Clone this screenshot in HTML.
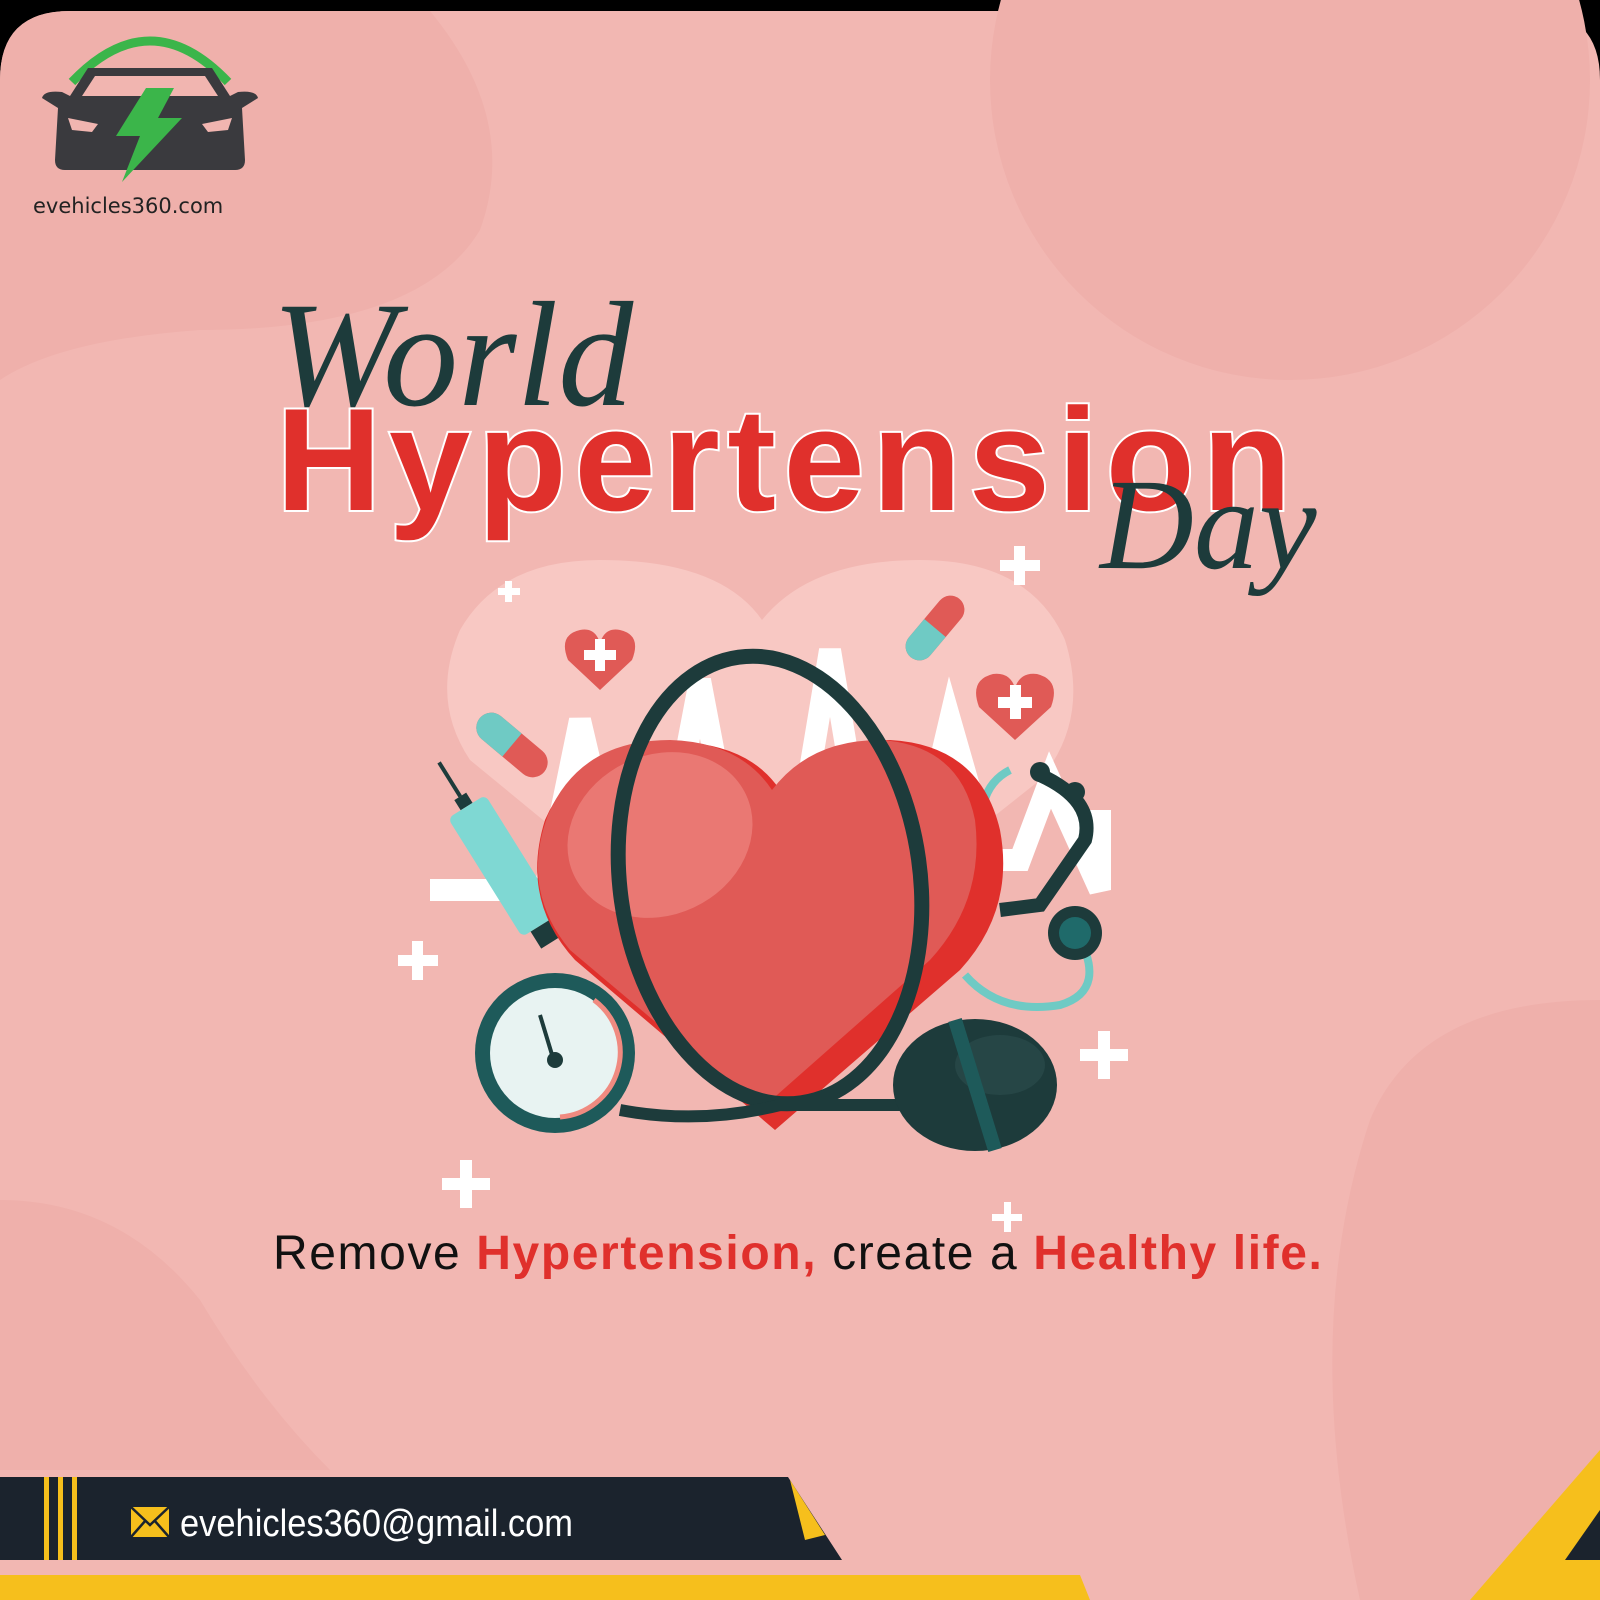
<!DOCTYPE html>
<html><head><meta charset="utf-8"><style>
html,body{margin:0;padding:0;background:#000}
#c{position:relative;width:1600px;height:1600px;overflow:hidden;background:#000}
</style></head><body><div id="c">
<svg width="1600" height="1600" viewBox="0 0 1600 1600" style="position:absolute;left:0;top:0">
<path d="M0 80 Q0 11 70 11 L1530 11 Q1600 11 1600 80 L1600 1600 L0 1600 Z" fill="#f2b7b2"/>
<circle cx="1290" cy="80" r="300" fill="#efb0ab"/>
<path d="M0 80 Q0 11 70 11 L430 11 Q520 120 480 230 Q420 330 200 330 Q60 340 0 380 Z" fill="#efb0ab"/>
<path d="M1600 1000 Q1420 1000 1370 1120 Q1300 1330 1360 1600 L1600 1600 Z" fill="#efb0ab"/>
<path d="M0 1200 Q120 1200 200 1300 Q260 1400 330 1470 L0 1470 Z" fill="#efb0ab"/>
<!-- logo -->
<path d="M72 82 Q150 0 228 82" fill="none" stroke="#3bb54a" stroke-width="9"/>
<path d="M42 98 Q44 90 62 92 L70 96 L88 68 L212 68 L230 96 L238 92 Q256 90 258 98 L242 108 L245 160 Q245 170 235 170 L65 170 Q55 170 55 160 L58 108 Z" fill="#3a3a3e"/>
<path d="M95 76 L205 76 L218 96 L82 96 Z" fill="#f1b5b0"/>
<path d="M68 118 L98 124 L92 132 L72 130 Z M232 118 L202 124 L208 132 L228 130 Z" fill="#f1b5b0"/>
<path d="M146 88 L174 88 L158 118 L182 118 L122 182 L140 136 L116 136 Z" fill="#3bb54a"/>
<text x="33" y="213" font-family="DejaVu Sans,sans-serif" font-size="21" fill="#222">evehicles360.com</text>
<!-- illustration -->
<path d="M762 1000 L470 760 Q430 700 460 630 Q500 560 600 560 Q720 560 762 620 Q810 560 920 560 Q1030 560 1065 640 Q1090 720 1040 780 Z" fill="#f8c8c3"/>
<polyline points="430,890 545,890 580,720 620,890 660,890 700,680 740,890 790,890 830,650 870,890 910,890 950,720 990,860 1020,860 1050,780 1100,890 1100,810" fill="none" stroke="#fff" stroke-width="22" stroke-linejoin="miter"/>
<g fill="#fff">
<rect x="498" y="588" width="22" height="7"/><rect x="505" y="581" width="7" height="21"/>
<rect x="1000" y="560" width="40" height="11"/><rect x="1014" y="546" width="11" height="39"/>
<rect x="398" y="955" width="40" height="11"/><rect x="412" y="941" width="11" height="39"/>
<rect x="1080" y="1049" width="48" height="12"/><rect x="1098" y="1031" width="12" height="48"/>
<rect x="442" y="1178" width="48" height="12"/><rect x="460" y="1160" width="12" height="48"/>
<rect x="992" y="1214" width="30" height="7"/><rect x="1004" y="1202" width="7" height="30"/>
</g>
<g transform="translate(600,655)"><path d="M0 35 L-32 5 Q-42 -20 -20 -25 Q-5 -28 0 -12 Q5 -28 20 -25 Q42 -20 32 5 Z" fill="#e05a56"/><rect x="-16" y="-5" width="32" height="10" fill="#fff"/><rect x="-5" y="-16" width="10" height="32" fill="#fff"/></g>
<g transform="translate(1015,702)"><path d="M0 38 L-36 5 Q-46 -22 -22 -28 Q-5 -30 0 -14 Q5 -30 22 -28 Q46 -22 36 5 Z" fill="#e05a56"/><rect x="-17" y="-5" width="34" height="11" fill="#fff"/><rect x="-5" y="-17" width="11" height="34" fill="#fff"/></g>
<g transform="translate(512,745) rotate(40)"><rect x="-42" y="-15" width="84" height="30" rx="15" fill="#e05a56"/><path d="M-27 -15 L0 -15 L0 15 L-27 15 A15 15 0 0 1 -27 -15" fill="#6fcac4"/></g>
<g transform="translate(935,628) rotate(-50)"><rect x="-38" y="-14" width="76" height="28" rx="14" fill="#e05a56"/><path d="M-24 -14 L0 -14 L0 14 L-24 14 A14 14 0 0 1 -24 -14" fill="#6fcac4"/></g>
<g transform="translate(500,860) rotate(-32)"><line x1="0" y1="-115" x2="0" y2="-75" stroke="#1d3b3b" stroke-width="4"/><rect x="-7" y="-75" width="14" height="12" fill="#1d3b3b"/><rect x="-22" y="-63" width="44" height="140" rx="6" fill="#7fd8d3"/><rect x="-12" y="77" width="24" height="20" fill="#1d3b3b"/></g>
<path d="M1040 775 Q1095 800 1085 840 L1040 905 L1000 910" fill="none" stroke="#1d3b3b" stroke-width="14"/>
<path d="M1010 770 Q970 790 985 860" fill="none" stroke="#6fcac4" stroke-width="8"/>
<circle cx="1040" cy="772" r="10" fill="#1d3b3b"/><circle cx="1075" cy="792" r="10" fill="#1d3b3b"/>
<path d="M1075 930 Q1110 990 1060 1005 Q1000 1015 965 975" fill="none" stroke="#6fcac4" stroke-width="8"/>
<circle cx="1075" cy="933" r="27" fill="#1d3b3b"/><circle cx="1075" cy="933" r="16" fill="#1f6a6a"/>
<path d="M775 1130 L575 960 Q520 900 545 820 Q580 740 680 742 Q750 745 780 790 Q820 740 890 740 Q980 745 1000 830 Q1015 910 960 970 Z" fill="#e0302c"/>
<path d="M760 1110 L570 950 Q520 890 548 815 Q580 740 670 740 Q740 742 772 790 Q810 740 880 740 Q960 745 975 820 Q985 900 930 960 Z" fill="#e05a56"/>
<ellipse cx="660" cy="835" rx="95" ry="80" fill="#ea7873" transform="rotate(-25 660 835)"/>
<ellipse cx="770" cy="880" rx="150" ry="225" fill="none" stroke="#1d3b3b" stroke-width="15" transform="rotate(-8 770 880)"/>
<path d="M620 1110 Q700 1125 780 1105 L900 1105" fill="none" stroke="#1d3b3b" stroke-width="12"/>
<circle cx="555" cy="1053" r="80" fill="#1e5a5a"/><circle cx="555" cy="1053" r="65" fill="#e8f3f2"/>
<path d="M594 1000 A65 65 0 0 1 560 1117" fill="none" stroke="#f08a80" stroke-width="5"/>
<path d="M540 1015 L553 1058" stroke="#1d3b3b" stroke-width="4"/><circle cx="555" cy="1060" r="8" fill="#1d3b3b"/>
<ellipse cx="975" cy="1085" rx="82" ry="66" fill="#1d3b3b"/>
<ellipse cx="1000" cy="1065" rx="45" ry="30" fill="#264646"/>
<path d="M955 1020 L995 1150" stroke="#1e5a5a" stroke-width="14"/>
</svg>
<div style="position:absolute;left:272px;top:280px;font-family:'Liberation Serif',serif;font-style:italic;font-size:150px;color:#1d3b3b;line-height:1">World</div>
<div style="position:absolute;left:276px;top:372px;font-family:'Liberation Sans',sans-serif;font-weight:bold;font-size:146px;color:#e0302c;line-height:1.2;letter-spacing:7.5px;-webkit-text-stroke:4px #fff;paint-order:stroke fill">Hypertension</div>
<div style="position:absolute;left:1100px;top:460px;font-family:'Liberation Serif',serif;font-style:italic;font-size:130px;color:#1d3b3b;line-height:1">Day</div>
<div style="position:absolute;left:273px;top:1226px;font-family:'Liberation Sans',sans-serif;font-size:48px;letter-spacing:1.6px;color:#111;white-space:nowrap">Remove <b style="color:#e0302c">Hypertension,</b> create a <b style="color:#e0302c">Healthy life.</b></div>
<svg width="1600" height="1600" viewBox="0 0 1600 1600" style="position:absolute;left:0;top:0">
<path d="M0 1575 L1080 1575 L1090 1600 L0 1600 Z" fill="#f6bf1c"/>
<path d="M1470 1600 L1600 1450 L1600 1600 Z" fill="#f6bf1c"/>
<path d="M1565 1560 L1600 1510 L1600 1560 Z" fill="#1b232d"/>
<path d="M0 1477 L788 1477 L842 1560 L0 1560 Z" fill="#1b232d"/>
<path d="M790 1480 L805 1540 L825 1535 Z" fill="#f6bf1c"/>
<rect x="44" y="1477" width="5" height="83" fill="#f6bf1c"/><rect x="58" y="1477" width="5" height="83" fill="#f6bf1c"/><rect x="72" y="1477" width="5" height="83" fill="#f6bf1c"/>
<rect x="131" y="1507" width="38" height="30" fill="#f6bf1c"/><path d="M131 1507 L150 1525 L169 1507 M131 1537 L146 1520 M169 1537 L154 1520" stroke="#1b232d" stroke-width="2.5" fill="none"/>
<text x="180" y="1536" font-family="Liberation Sans,sans-serif" font-size="38" fill="#fff" textLength="393" lengthAdjust="spacingAndGlyphs">evehicles360@gmail.com</text>
</svg>
</div></body></html>
